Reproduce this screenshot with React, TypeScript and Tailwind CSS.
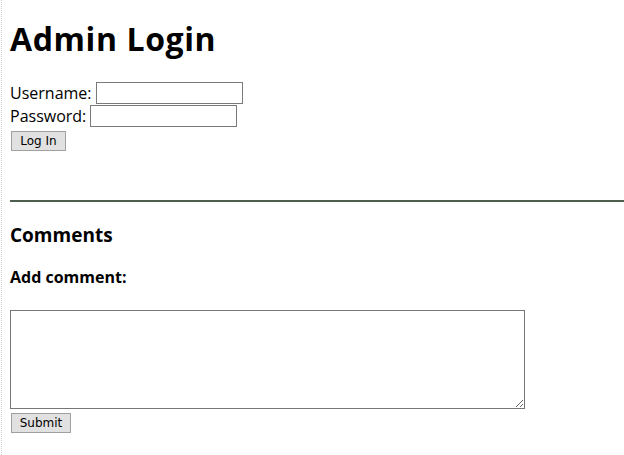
export default function App() {
  return (
    <div className="min-h-[455px] w-[623px] bg-white ml-[1px] border-l border-dotted border-[#d0d0d0] pl-[8px] text-black" style={{ fontFamily: '"Open Sans", "Noto Sans", sans-serif' }}>
      <h1 className="pt-[17px] text-[32px] font-bold leading-[44px] tracking-[0.6px]">Admin Login</h1>
      <div className="mt-[21px] flex items-center h-[22px] text-[16px] leading-[22px]">
        <span>Username:</span>
        <input type="text" className="ml-[4px] w-[147px] h-[22px] border border-[#7a7a7a] bg-white" />
      </div>
      <div className="mt-[1px] flex items-center h-[22px] text-[16px] leading-[22px]">
        <span>Password:</span>
        <input type="password" className="ml-[4px] w-[147px] h-[22px] border border-[#7a7a7a] bg-white" />
      </div>
      <button className="mt-[1px] ml-[1px] w-[55px] h-[20px] border border-[#a0a0a0] bg-[#e1e1e1] text-[12px] leading-[18px]" style={{ fontFamily: '"DejaVu Sans", sans-serif' }}>Log In</button>
      <div className="mt-[49px] h-[2px] bg-[#4f5f4f]" />
      <h3 className="mt-[20px] text-[19px] font-bold leading-[26px]">Comments</h3>
      <h4 className="mt-[18px] text-[16px] font-bold leading-[22px]">Add comment:</h4>
      <textarea className="mt-[22px] block w-[515px] h-[99px] border border-[#777777] resize" />
      <button className="mt-[2px] ml-[1px] w-[60px] h-[20px] border border-[#a0a0a0] bg-[#e1e1e1] text-[12px] leading-[18px]" style={{ fontFamily: '"DejaVu Sans", sans-serif' }}>Submit</button>
    </div>
  );
}
